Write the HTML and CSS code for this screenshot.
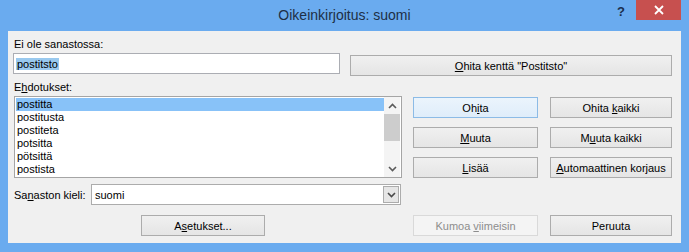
FILE: index.html
```html
<!DOCTYPE html>
<html lang="fi">

<head>
    <meta charset="UTF-8">
    <title>Oikeinkirjoitus: suomi</title>
    <link rel="stylesheet" href="styles.css">
</head>

<body>
    <div class="window">
        <div class="titlebar">
            <span></span>
            <span class="title">Oikeinkirjoitus: suomi</span>
            <div class="controls">
                <span class="help">?</span>
                <span class="close">
                    <svg width="10" height="10" viewBox="0 0 10 10">
                        <path d="M1 1 L9 9 M9 1 L1 9" stroke="#fff" stroke-width="1.8" fill="none" />
                    </svg>
                </span>
            </div>
        </div>

        <div class="client">
            <div class="label label-top">Ei ole sanastossa:</div>
            <div class="row row-word">
                <div class="textbox"><span class="selected-text">postitsto</span></div>
                <button class="btn btn-wide"><u>O</u>hita kenttä "Postitsto"</button>
            </div>

            <div class="label label-list">E<u>h</u>dotukset:</div>
            <div class="row row-list">
                <div class="listbox">
                    <ul class="items">
                        <li class="active">postitta</li>
                        <li>postitusta</li>
                        <li>postiteta</li>
                        <li>potsitta</li>
                        <li>pötsittä</li>
                        <li>postista</li>
                    </ul>
                    <div class="scrollbar">
                        <span class="arrow">
                            <svg width="9" height="6" viewBox="0 0 9 6">
                                <path d="M1 5 L4.5 1.5 L8 5" stroke="#5a5a5a" stroke-width="1.6" fill="none" />
                            </svg>
                        </span>
                        <span class="thumb"></span>
                        <span class="track"></span>
                        <span class="arrow">
                            <svg width="9" height="6" viewBox="0 0 9 6">
                                <path d="M1 1 L4.5 4.5 L8 1" stroke="#5a5a5a" stroke-width="1.6" fill="none" />
                            </svg>
                        </span>
                    </div>
                </div>

                <div class="actions">
                    <button class="btn btn-default">Oh<u>i</u>ta</button>
                    <button class="btn">Ohita <u>k</u>aikki</button>
                    <button class="btn"><u>M</u>uuta</button>
                    <button class="btn">M<u>u</u>uta kaikki</button>
                    <button class="btn"><u>L</u>isää</button>
                    <button class="btn"><u>A</u>utomaattinen korjaus</button>
                </div>
            </div>

            <div class="row row-lang">
                <span class="label">Sa<u>n</u>aston kieli:</span>
                <div class="combo">
                    <span class="combo-value">suomi</span>
                    <span class="combo-drop">
                        <svg width="9" height="6" viewBox="0 0 9 6">
                            <path d="M1 1 L4.5 4.5 L8 1" stroke="#4a4a4a" stroke-width="1.6" fill="none" />
                        </svg>
                    </span>
                </div>
            </div>

            <div class="row row-bottom">
                <button class="btn btn-options">A<u>s</u>etukset...</button>
                <button class="btn btn-undo" disabled>Kumoa <u>v</u>iimeisin</button>
                <button class="btn btn-cancel">Peruuta</button>
            </div>
        </div>
    </div>
</body>

</html>
```

FILE: styles.css
```css
body {
    margin: 0;
    background-color: #6aabef;
    font-family: 'Liberation Sans', Arial, sans-serif;
    font-size: 11px;
    color: #000;
}

.window {
    width: 689px;
    height: 252px;
    background-color: #6aabef;
}

/* --- title bar --- */
.titlebar {
    height: 31px;
    display: grid;
    grid-template-columns: 1fr auto 1fr;
    align-items: start;
}

.title {
    font-size: 14px;
    line-height: 16px;
    margin-top: 7px;
    color: #1d2f46;
}

.controls {
    display: flex;
    justify-content: flex-end;
    align-items: flex-start;
    padding-right: 8px;
}

.help {
    font-weight: bold;
    font-size: 13px;
    line-height: 14px;
    margin-top: 5px;
    margin-right: 11px;
    color: #1b2f4d;
}

.close {
    width: 45px;
    height: 20px;
    background-color: #c7504f;
    display: flex;
    justify-content: center;
    align-items: center;
}

/* --- client area --- */
.client {
    margin: 0 8px;
    height: 212px;
    box-sizing: border-box;
    padding-left: 5px;
    background-color: #f0f0f0;
    display: flex;
    flex-direction: column;
}

.label {
    line-height: 14px;
    margin-left: 1px;
}

.label-top {
    margin-top: 6px;
}

.label-list {
    margin-top: 4px;
}

.row {
    display: flex;
    align-items: flex-start;
}

.row-word {
    margin-top: 2px;
}

.textbox {
    width: 327px;
    height: 21px;
    box-sizing: border-box;
    border: 1px solid #abadb3;
    background: #fff;
    padding: 3px 2px 0 2px;
    line-height: 14px;
}

.selected-text {
    background-color: #99c9ef;
    padding: 0 1px;
}

/* --- buttons --- */
.btn {
    height: 21px;
    box-sizing: border-box;
    border: 1px solid #acacac;
    background: linear-gradient(#f0f0f0, #e5e5e5);
    font-family: 'Liberation Sans', Arial, sans-serif;
    font-size: 11px;
    color: #000;
    padding: 0;
    text-align: center;
    line-height: 18px;
}

.btn-wide {
    width: 322px;
    margin-left: 10px;
    margin-top: 2px;
}

.btn-default {
    border-color: #8cbbe6;
    background: linear-gradient(#ebf4fc, #dfedfa);
}

.btn:disabled {
    color: #8d8d8d;
    border-color: #d9d9d9;
    background: #f4f4f4;
}

/* --- suggestions list --- */
.row-list {
    margin-top: 2px;
}

.listbox {
    width: 388px;
    height: 82px;
    margin-left: 1px;
    box-sizing: border-box;
    border: 1px solid #a5a5a5;
    background: #fff;
    display: flex;
}

.items {
    list-style: none;
    margin: 0;
    padding: 1px 0 0 1px;
    flex: 1;
}

.items li {
    height: 13px;
    line-height: 13px;
    padding-left: 1px;
}

.items .active {
    background-color: #88c2f8;
}

.scrollbar {
    width: 16px;
    margin-right: 1px;
    background-color: #f4f4f4;
    display: flex;
    flex-direction: column;
}

.arrow {
    height: 17px;
    display: flex;
    justify-content: center;
    align-items: center;
}

.thumb {
    height: 27px;
    background-color: #cdcdcd;
}

.track {
    flex: 1;
}

.actions {
    margin-left: 11px;
    margin-top: 1px;
    display: grid;
    grid-template-columns: 125px 122px;
    column-gap: 12px;
    row-gap: 9px;
}

/* --- language row --- */
.row-lang {
    margin-top: 6px;
    align-items: center;
}

.row-lang .label {
    width: 77px;
}

.combo {
    width: 310px;
    height: 21px;
    box-sizing: border-box;
    border: 1px solid #acacac;
    background: #fff;
    display: flex;
    align-items: center;
    justify-content: space-between;
}

.combo-value {
    padding-left: 3px;
}

.combo-drop {
    width: 16px;
    height: 17px;
    margin-right: 1px;
    box-sizing: border-box;
    border: 1px solid #acacac;
    background: #e6e6e6;
    display: flex;
    justify-content: center;
    align-items: center;
}

/* --- bottom buttons --- */
.row-bottom {
    margin-top: 10px;
}

.btn-options {
    width: 124px;
    margin-left: 128px;
}

.btn-undo {
    width: 125px;
    margin-left: 148px;
}

.btn-cancel {
    width: 122px;
    margin-left: 12px;
}
```
